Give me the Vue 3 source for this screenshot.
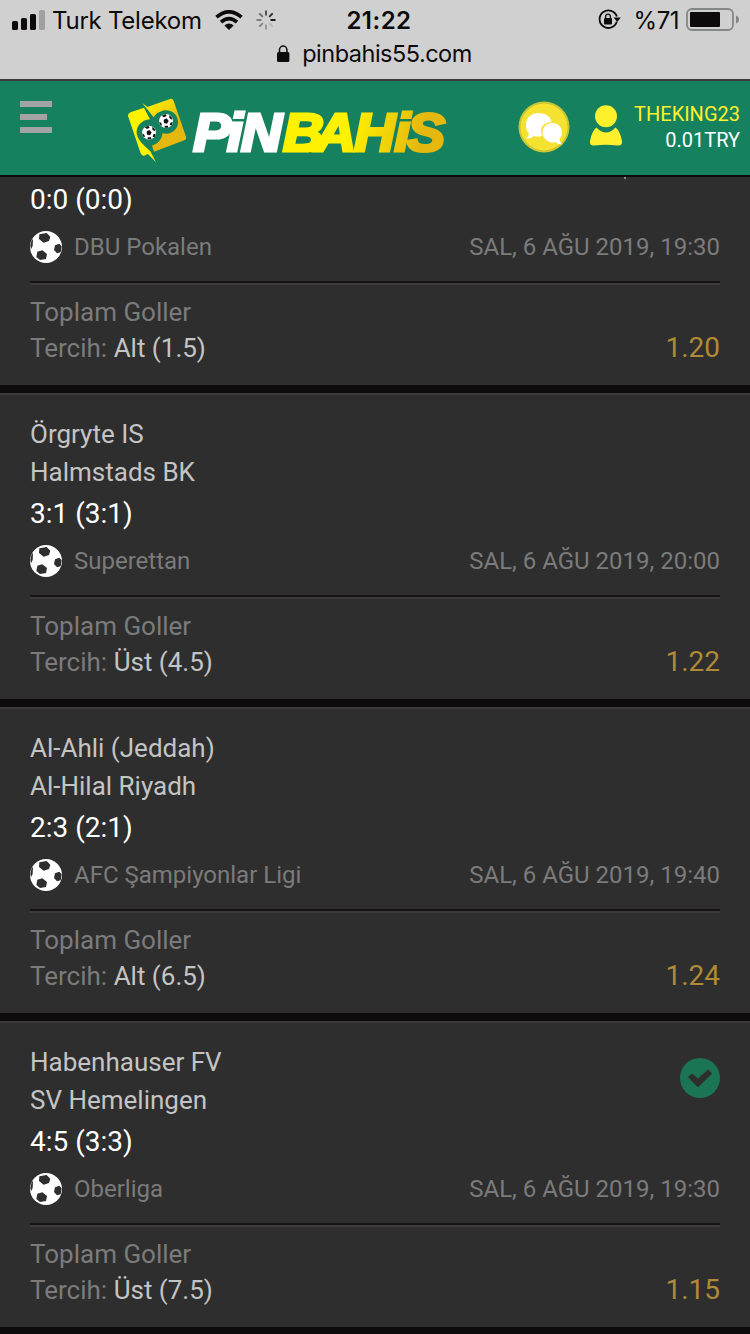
<script setup>
import { reactive } from 'vue'

const data = reactive({
  user: 'THEKING23',
  balance: '0.01TRY',
  bets: [
    { id: 1, teams: [], score: '0:0 (0:0)', league: 'DBU Pokalen', date: 'SAL, 6 AĞU 2019, 19:30', pick: 'Alt (1.5)', odd: '1.20' },
    { id: 2, teams: ['Örgryte IS', 'Halmstads BK'], score: '3:1 (3:1)', league: 'Superettan', date: 'SAL, 6 AĞU 2019, 20:00', pick: 'Üst (4.5)', odd: '1.22' },
    { id: 3, teams: ['Al-Ahli (Jeddah)', 'Al-Hilal Riyadh'], score: '2:3 (2:1)', league: 'AFC Şampiyonlar Ligi', date: 'SAL, 6 AĞU 2019, 19:40', pick: 'Alt (6.5)', odd: '1.24' },
    { id: 4, teams: ['Habenhauser FV', 'SV Hemelingen'], score: '4:5 (3:3)', league: 'Oberliga', date: 'SAL, 6 AĞU 2019, 19:30', pick: 'Üst (7.5)', odd: '1.15', won: true }
  ]
})

// spinner spokes, clockwise from the top
const spokes = [0.7, 0.85, 1, 0.12, 0.3, 0.4, 0.45, 0.5]
</script>

<template>
  <div class="screen">
    <div class="browser-bar">
      <div class="status">
        <div class="status-left">
          <svg class="signal" width="34" height="20" viewBox="0 0 34 20">
            <rect x="0" y="11" width="6" height="9" rx="1.6" />
            <rect x="9" y="8" width="6" height="12" rx="1.6" />
            <rect x="18" y="4" width="6" height="16" rx="1.6" />
            <rect x="27" y="0" width="6" height="20" rx="1.6" fill="#a0a0a0" />
          </svg>
          <span class="carrier">Turk Telekom</span>
          <svg class="wifi" width="28" height="20" viewBox="0 0 28 20">
            <path d="M14 20L9.3 15.6Q14 11.6 18.7 15.6Z" />
            <path d="M1.5 7.2Q14 -3.6 26.5 7.2M6 12.1Q14 5.2 22 12.1" fill="none" stroke="#0c0a0b" stroke-width="3.6" />
          </svg>
          <svg class="spinner" width="20" height="20" viewBox="-10 -10 20 20">
            <line v-for="(o, i) in spokes" :key="i" y1="-9.5" y2="-4.5" :opacity="o" :transform="`rotate(${i * 45})`" />
          </svg>
        </div>
        <div class="clock">21:22</div>
        <div class="status-right">
          <svg class="rotation" width="23" height="22" viewBox="0 0 23 22">
            <path d="M18.8 12.8A8.8 8.8 0 1 1 18.8 7.5" fill="none" stroke="#0c0a0b" stroke-width="1.8" />
            <path d="M15.6 8.5H22.8L19.2 13Z" />
            <rect x="6" y="9" width="8" height="6.5" rx="1" />
            <path d="M7.6 9.5V7.5A2.4 2.4 0 0 1 12.4 7.5V9.5" fill="none" stroke="#0c0a0b" stroke-width="1.3" />
          </svg>
          <span class="percent">%71</span>
          <svg class="battery" width="54" height="24" viewBox="0 0 54 24">
            <rect x="1" y="1" width="46" height="21" rx="5" fill="none" stroke="#858787" stroke-width="1.8" />
            <rect x="4" y="4" width="30" height="15" rx="1" />
            <path d="M50 7.5Q53 8.5 53 11.5Q53 14.5 50 15.5Z" fill="#858787" />
          </svg>
        </div>
      </div>
      <div class="address">
        <svg width="13" height="17" viewBox="0 0 13 17">
          <rect x="0" y="7" width="12.4" height="10" rx="1.6" />
          <path d="M2.5 8V4.8A3.7 3.7 0 0 1 9.9 4.8V8" fill="none" stroke="#0c0a0b" stroke-width="1.5" />
        </svg>
        <span>pinbahis55.com</span>
      </div>
    </div>

    <header class="header">
      <div class="menu">
        <i></i><i class="short"></i><i></i>
      </div>
      <svg class="logo" width="345" height="84" viewBox="0 0 345 84">
        <defs>
          <linearGradient id="gold" x1="0" y1="0" x2="0.7" y2="1">
            <stop offset="0.1" stop-color="#fff200" />
            <stop offset="0.65" stop-color="#e5b80f" />
          </linearGradient>
          <linearGradient id="word" gradientUnits="userSpaceOnUse" x1="153" y1="20" x2="305" y2="50">
            <stop offset="0.4" stop-color="#fff200" />
            <stop offset="0.85" stop-color="#e5b80f" />
          </linearGradient>
          <g id="logo-ball">
            <circle r="21" fill="#fff" />
            <path d="M-7 -4L2 -8L8 0L3 8L-6 6ZM-13 -16L-2 -21L2 -15L-6 -11ZM10 -18L18 -10L17 -4L10 -9ZM20 3L17 13L11 13L13 5ZM-4 14L6 14L7 20L-4 20ZM-20 2L-14 6L-12 14L-18 11Z" fill="#151515" />
          </g>
        </defs>
        <g transform="scale(0.33333)">
          <path d="M24 78Q24 69 34 66L72 53L90 88C62 90 48 112 50 130C53 155 80 172 91 184L108 217L84 192L72 197Q65 198 62 190Z" fill="#fff200" />
          <path d="M66 38L82 51L150 27Q158 25 161 33L198 140Q200 148 193 151L102 185L96 167C114 161 126 148 127 130C158 136 176 115 174 93C171 68 148 57 128 62C114 66 106 72 101 82Z" fill="url(#gold)" />
          <use href="#logo-ball" x="87" y="128" />
          <use href="#logo-ball" x="138" y="93" />
        </g>
        <g class="word" transform="scale(1.07 1)">
          <text x="68.4 100 113" y="60.8" fill="#fff" stroke="#fff">PiN</text>
          <text x="152.3 182.5 219 256.5 268.5" y="60.8" fill="url(#word)" stroke="url(#word)">BAHiS</text>
        </g>
      </svg>
      <div class="account">
        <svg class="chat" width="52" height="52" viewBox="0 0 52 52">
          <circle cx="26" cy="26" r="25.5" fill="#c9c534" />
          <circle cx="26" cy="26" r="23.5" fill="#f5e12f" />
          <path d="M20 12C28 12 33 16 33.5 21C27 21 23 25 23 30Q23 33 24.5 35Q19 36 16 35Q13 38 8 37.5Q11 35 11 32C8 29 8 26 8 24C8 17 13 12 20 12Z" fill="#fff" />
          <path d="M34 22C40 22 44 26 44 31.5Q44 35 41.5 38Q42 41 44 43.5Q40 43.5 37.5 41Q35 42 32 41C28 40 24.5 36 24.5 31.5C24.5 26 29 22 34 22Z" fill="#fff" />
        </svg>
        <svg class="person" width="32" height="41" viewBox="0 0 32 41">
          <ellipse cx="16" cy="11.2" rx="11" ry="11" />
          <path d="M6.5 22.5Q11 27.5 16 27.5Q21 27.5 25.5 22.5Q30 25.5 32 36Q32.5 41 28 40.5Q16 39 4 40.5Q-0.5 41 0 36Q2 25.5 6.5 22.5Z" />
        </svg>
        <div class="user">
          <div class="name">{{ data.user }}</div>
          <div class="balance">{{ data.balance }}</div>
        </div>
      </div>
    </header>

    <main class="bets">
      <section v-for="bet in data.bets" :key="bet.id" class="bet" :class="{ clipped: !bet.teams.length }">
        <div v-for="team in bet.teams" :key="team" class="team">{{ team }}</div>
        <div class="score">{{ bet.score }}</div>
        <div class="league-row">
          <svg class="ball" width="32" height="32" viewBox="0 0 96 96">
            <circle cx="48" cy="48" r="48" fill="#fff" />
            <path d="M28 10L50 6L61 17L57 30L41 35L27 24ZM75 43L88 38L95 46L92 64L81 67L72 57ZM22 62L37 58L51 69L48 84L30 87L19 78ZM5 27L9 25L8 45L3 55L1 44Z" fill="#2e2e2e" />
          </svg>
          <span class="league">{{ bet.league }}</span>
          <span class="date">{{ bet.date }}</span>
        </div>
        <div class="market">
          <div>Toplam Goller</div>
          <div class="pick-row">
            <span>Tercih: <b>{{ bet.pick }}</b></span>
            <span class="odd">{{ bet.odd }}</span>
          </div>
        </div>
        <svg v-if="bet.won" class="won" width="40" height="40" viewBox="0 0 40 40">
          <circle cx="20" cy="20" r="20" fill="#1b7453" />
          <path d="M8 19L12 15.5L18 20.5L28 11.5L32 15.5L19 28.5Q18 29 17 28.5Z" fill="#2e2e2e" />
        </svg>
        <i v-if="!bet.teams.length" class="speck"></i>
      </section>
    </main>
  </div>
</template>

<style>
body {
  background: #0e0b0c;
}
</style>

<style scoped>
.screen {
  width: 750px;
  height: 1334px;
  overflow: hidden;
  background: #0e0b0c;
  font-family: Roboto, sans-serif;
}

.browser-bar {
  box-sizing: border-box;
  height: 81px;
  background: #d0d0d0;
  border-bottom: 2px solid #3b393a;
  color: #0c0a0b;
  fill: #0c0a0b;
  font-family: Inter, sans-serif;
}

.status {
  display: grid;
  grid-template-columns: 1fr auto 1fr;
  align-items: center;
  height: 40px;
  padding: 0 10px 0 12px;
}

.status-left,
.status-right {
  display: flex;
  align-items: center;
}

.status-right {
  justify-content: flex-end;
}

.carrier {
  margin-left: 6px;
  width: 150px;
  font-size: 24px;
  letter-spacing: -0.25px;
  white-space: nowrap;
}

.wifi {
  margin-left: 13px;
}

.spinner {
  margin-left: 13px;
  stroke: #0c0a0b;
  stroke-width: 1.8;
}

.clock {
  padding-left: 6px;
  font-size: 24px;
  font-weight: 600;
  letter-spacing: 0.5px;
}

.percent {
  margin: 0 7px 0 13px;
  font-size: 24px;
  letter-spacing: -0.5px;
}

.address {
  display: flex;
  align-items: center;
  justify-content: center;
  gap: 12px;
  height: 27px;
  padding-right: 1px;
  font-size: 23.5px;
  letter-spacing: -0.5px;
}

.header {
  display: flex;
  box-sizing: border-box;
  height: 96px;
  padding: 0 10px 0 20px;
  background: #16815e;
  border-bottom: 2px solid #0e0b0c;
}

.menu {
  display: flex;
  flex-direction: column;
  gap: 7px;
  width: 32px;
  padding-top: 20px;
}

.menu i {
  height: 6px;
  background: #a3a3a3;
}

.menu .short {
  width: 27px;
}

.logo {
  margin: 9px 0 0 68px;
}

.word {
  font-family: "Liberation Sans", sans-serif;
  font-size: 53px;
  font-weight: 700;
  font-style: italic;
  stroke-width: 3.2px;
}

.account {
  display: flex;
  align-items: center;
  flex: 1;
  height: 92px;
  padding-left: 53px;
}

.person {
  margin: -3px 0 0 20px;
  fill: #fff02d;
}

.user {
  margin-left: auto;
  font-size: 20px;
  line-height: 26px;
  text-align: right;
  color: #fff;
}

.name {
  color: #fff02d;
}

.bets {
  display: flex;
  flex-direction: column;
  gap: 8px;
}

.bet {
  position: relative;
  padding: 20px 30px 19px;
  border-top: 2px solid #3c3a3b;
  background: #2e2e2e;
}

.clipped {
  padding-top: 0;
  border-top: 0;
}

.team {
  color: #c4c4c4;
  font-size: 26px;
  line-height: 38px;
}

.score {
  color: #fff;
  font-size: 28px;
  line-height: 46px;
}

.league-row {
  display: flex;
  align-items: center;
  height: 50px;
  padding-bottom: 8px;
  border-bottom: 2px solid #171415;
  color: #7b7b7b;
  font-size: 24px;
}

.ball,
.league,
.date {
  margin-top: -2px;
}

.league {
  margin-left: 12px;
}

.date {
  margin-left: auto;
}

.market {
  padding-top: 9px;
  border-top: 2px solid #3c3a3b;
  color: #7b7b7b;
  font-size: 26px;
  line-height: 36px;
}

.pick-row {
  display: flex;
  justify-content: space-between;
}

.pick-row b {
  color: #c4c4c4;
  font-weight: 400;
}

.odd {
  color: #b08a36;
  font-size: 28px;
}

.won {
  position: absolute;
  top: 35px;
  right: 30px;
}

.speck {
  position: absolute;
  top: 0;
  left: 624px;
  width: 2px;
  height: 2px;
  background: #8a8a8a;
}
</style>
